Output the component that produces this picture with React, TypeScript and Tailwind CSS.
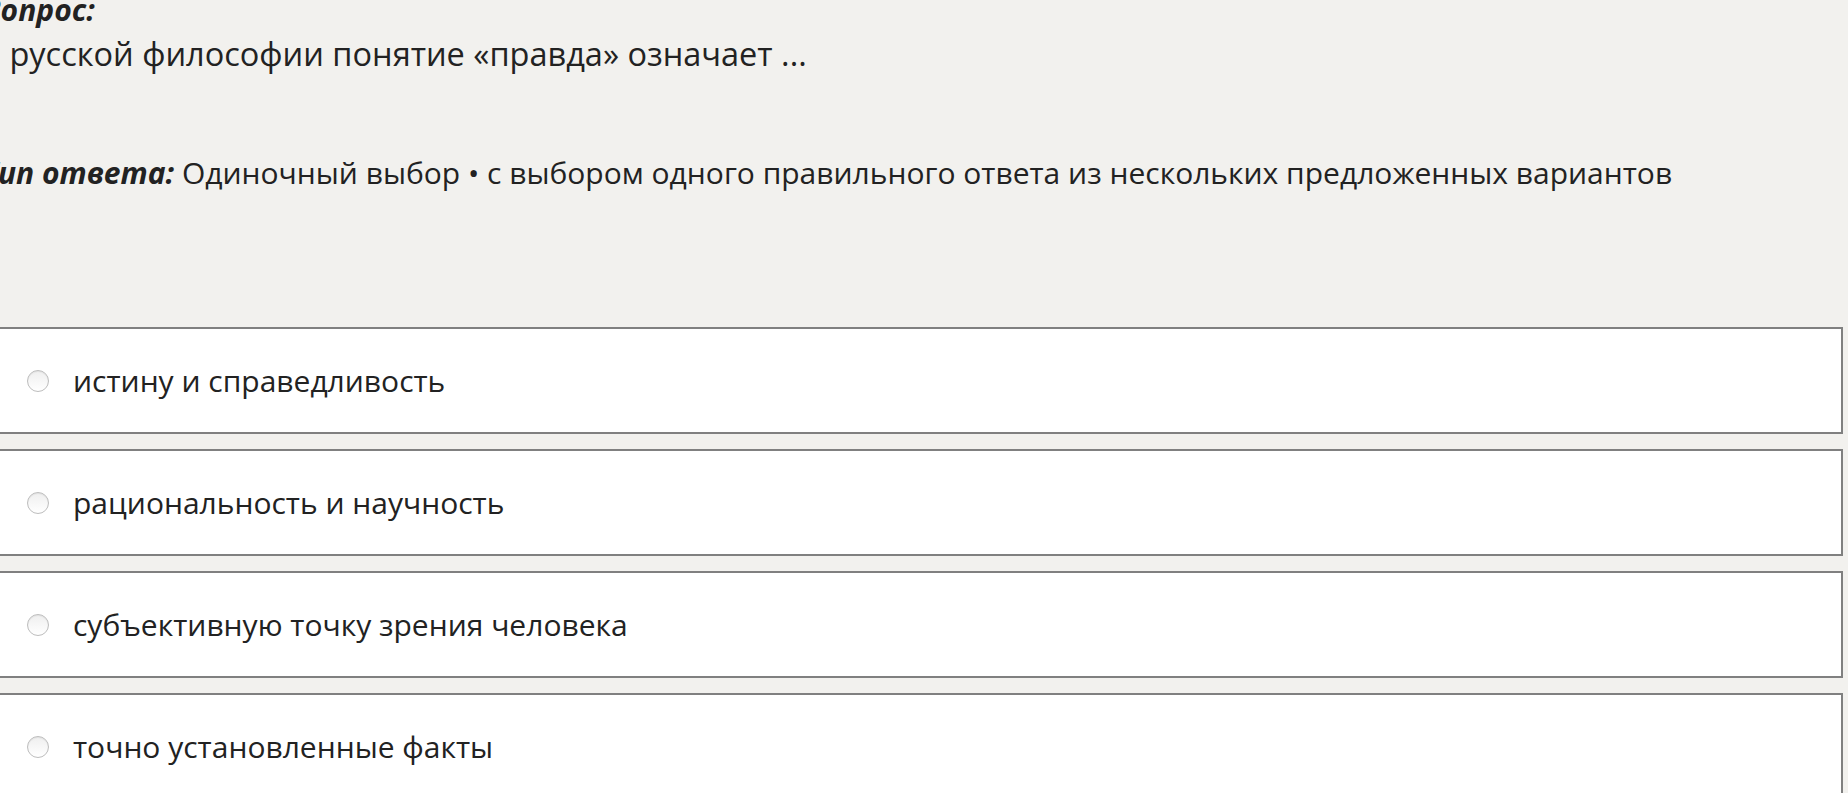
const options = [
  'истину и справедливость',
  'рациональность и научность',
  'субъективную точку зрения человека',
  'точно установленные факты',
];

function Radio() {
  return (
    <span className="block w-[22px] h-[22px] shrink-0 rounded-full border border-[#bdbdbd] bg-gradient-to-b from-[#efefef] to-white shadow-[inset_0_1px_1px_rgba(0,0,0,0.06)]" />
  );
}

export default function App() {
  return (
    <div
      className="h-[793px] overflow-hidden bg-[#f2f1ee] text-[#222]"
      style={{ fontFamily: '"Open Sans", "Noto Sans", sans-serif' }}
    >
      <div className="w-[1863px] -ml-[20px] -mt-[7px]">
        <div className="pl-[2px] leading-[40px]">
          <p className="text-[30px] leading-[34px] font-bold italic">Вопрос:</p>
          <p className="mt-[7px] -ml-[2px] text-[32.5px]">В русской философии понятие «правда» означает ...</p>
          <p className="mt-[79px] text-[30px]">
            <span className="font-bold italic">Тип ответа:</span> Одиночный выбор • с выбором одного
            правильного ответа из нескольких предложенных вариантов
          </p>
        </div>

        <div className="mt-[134px] flex flex-col gap-[15px]">
          {options.map((text) => (
            <label
              key={text}
              className="h-[107px] flex items-center gap-[24px] pl-[45px] border-2 border-[#808080] bg-white"
            >
              <Radio />
              <span className="text-[30px]">{text}</span>
            </label>
          ))}
        </div>
      </div>
    </div>
  );
}
